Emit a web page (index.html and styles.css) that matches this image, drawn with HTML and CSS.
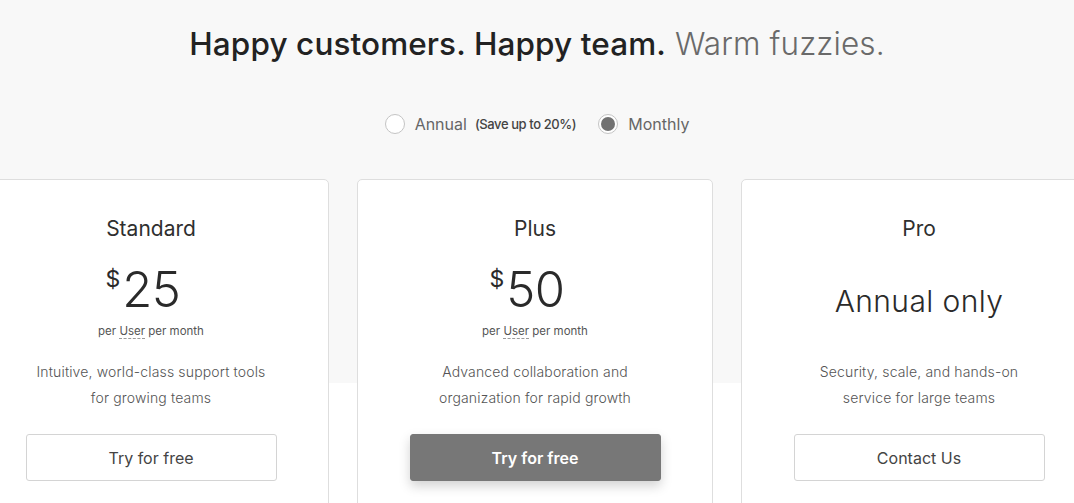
FILE: index.html
```html
<!DOCTYPE html>
<html lang="en">
<head>
<meta charset="utf-8">
<title>Pricing</title>
<link rel="stylesheet" href="styles.css">
</head>
<body>
<div class="page">
  <h1 class="headline"><span class="strong">Happy customers. Happy team.</span> <span class="soft">Warm fuzzies.</span></h1>
  <div class="billing">
    <label class="option"><span class="radio"></span><span class="opt-label">Annual</span><span class="save">(Save up to 20%)</span></label>
    <label class="option"><span class="radio checked"></span><span class="opt-label">Monthly</span></label>
  </div>
  <div class="plans">
    <div class="card">
      <h2 class="plan-name">Standard</h2>
      <div class="price"><span class="cur">$</span><span class="amt">25</span></div>
      <div class="per">per <span class="dotted">User</span> per month</div>
      <p class="desc">Intuitive, world-class support tools<br>for growing teams</p>
      <a class="btn">Try for free</a>
    </div>
    <div class="card">
      <h2 class="plan-name">Plus</h2>
      <div class="price"><span class="cur">$</span><span class="amt">50</span></div>
      <div class="per">per <span class="dotted">User</span> per month</div>
      <p class="desc">Advanced collaboration and<br>organization for rapid growth</p>
      <a class="btn primary">Try for free</a>
    </div>
    <div class="card">
      <h2 class="plan-name">Pro</h2>
      <div class="annual-only">Annual only</div>
      <p class="desc">Security, scale, and hands-on<br>service for large teams</p>
      <a class="btn">Contact Us</a>
    </div>
  </div>
</div>
</body>
</html>
```
FILE: styles.css
```css
html, body {
  margin: 0;
  padding: 0;
  overflow: hidden;
}
body {
  font-family: Inter, Roboto, "Liberation Sans", sans-serif;
  color: #2f2f2f;
  background: #fff;
}
.page {
  background: linear-gradient(#f8f8f8 0, #f8f8f8 383px, #ffffff 383px);
  padding-top: 24px;
  min-height: 503px;
}
.headline {
  margin: 0;
  text-align: center;
  font-size: 31.5px;
  line-height: 40px;
  font-weight: 400;
  letter-spacing: 0.1px;
}
.headline .strong {
  font-weight: 500;
  color: #222;
}
.headline .soft {
  color: #6a6a6a;
  font-weight: 300;
}
.billing {
  margin-top: 48px;
  display: flex;
  justify-content: center;
  gap: 22px;
  height: 24px;
  align-items: center;
}
.option {
  display: flex;
  align-items: center;
}
.radio {
  width: 18px;
  height: 18px;
  border: 1px solid #c4c4c4;
  border-radius: 50%;
  background: #fff;
  box-sizing: content-box;
  display: inline-flex;
  align-items: center;
  justify-content: center;
  margin-right: 10px;
}
.radio.checked::after {
  content: "";
  width: 14px;
  height: 14px;
  border-radius: 50%;
  background: #727272;
}
.opt-label {
  font-size: 16px;
  color: #666;
}
.save {
  font-size: 13px;
  color: #444;
  margin-left: 8px;
  font-weight: 500;
  letter-spacing: -0.4px;
}
.plans {
  margin-top: 43px;
  display: flex;
  justify-content: center;
  gap: 28px;
  margin-left: -4px;
}
.card {
  flex: 0 0 356px;
  box-sizing: border-box;
  background: #fff;
  border: 1px solid #dedede;
  border-radius: 5px;
  padding: 34px 0 40px;
  display: flex;
  flex-direction: column;
  align-items: center;
  text-align: center;
}
.plan-name {
  margin: 0;
  font-size: 21px;
  line-height: 30px;
  font-weight: 400;
  color: #2f2f2f;
}
.price {
  margin-top: 18px;
  height: 56px;
  display: flex;
  align-items: flex-start;
  justify-content: center;
  color: #2a2a2a;
  padding-right: 16px;
}
.cur {
  font-size: 23px;
  line-height: 22px;
  margin-top: 6px;
  margin-right: 2px;
}
.amt {
  font-size: 49px;
  line-height: 56px;
  font-weight: 300;
  letter-spacing: -0.5px;
}
.per {
  margin-top: 5px;
  font-size: 11.5px;
  line-height: 16px;
  color: #555;
}
.dotted {
  border-bottom: 1px dashed #9a9a9a;
}
.annual-only {
  margin-top: 18px;
  height: 77px;
  display: flex;
  align-items: center;
  justify-content: center;
  font-size: 30px;
  font-weight: 300;
  color: #2a2a2a;
  letter-spacing: 0.4px;
}
.desc {
  margin: 20px 0 0;
  font-size: 14px;
  line-height: 26px;
  color: #555;
  font-weight: 300;
  letter-spacing: 0.15px;
}
.btn {
  margin-top: 23px;
  width: 251px;
  height: 47px;
  box-sizing: border-box;
  border: 1px solid #d4d4d4;
  border-radius: 3px;
  display: flex;
  align-items: center;
  justify-content: center;
  font-size: 16px;
  color: #444;
  background: #fff;
}
.btn.primary {
  background: #777;
  border-color: #777;
  color: #fff;
  font-weight: 600;
  box-shadow: 0 5px 12px rgba(0, 0, 0, 0.18);
}
```
